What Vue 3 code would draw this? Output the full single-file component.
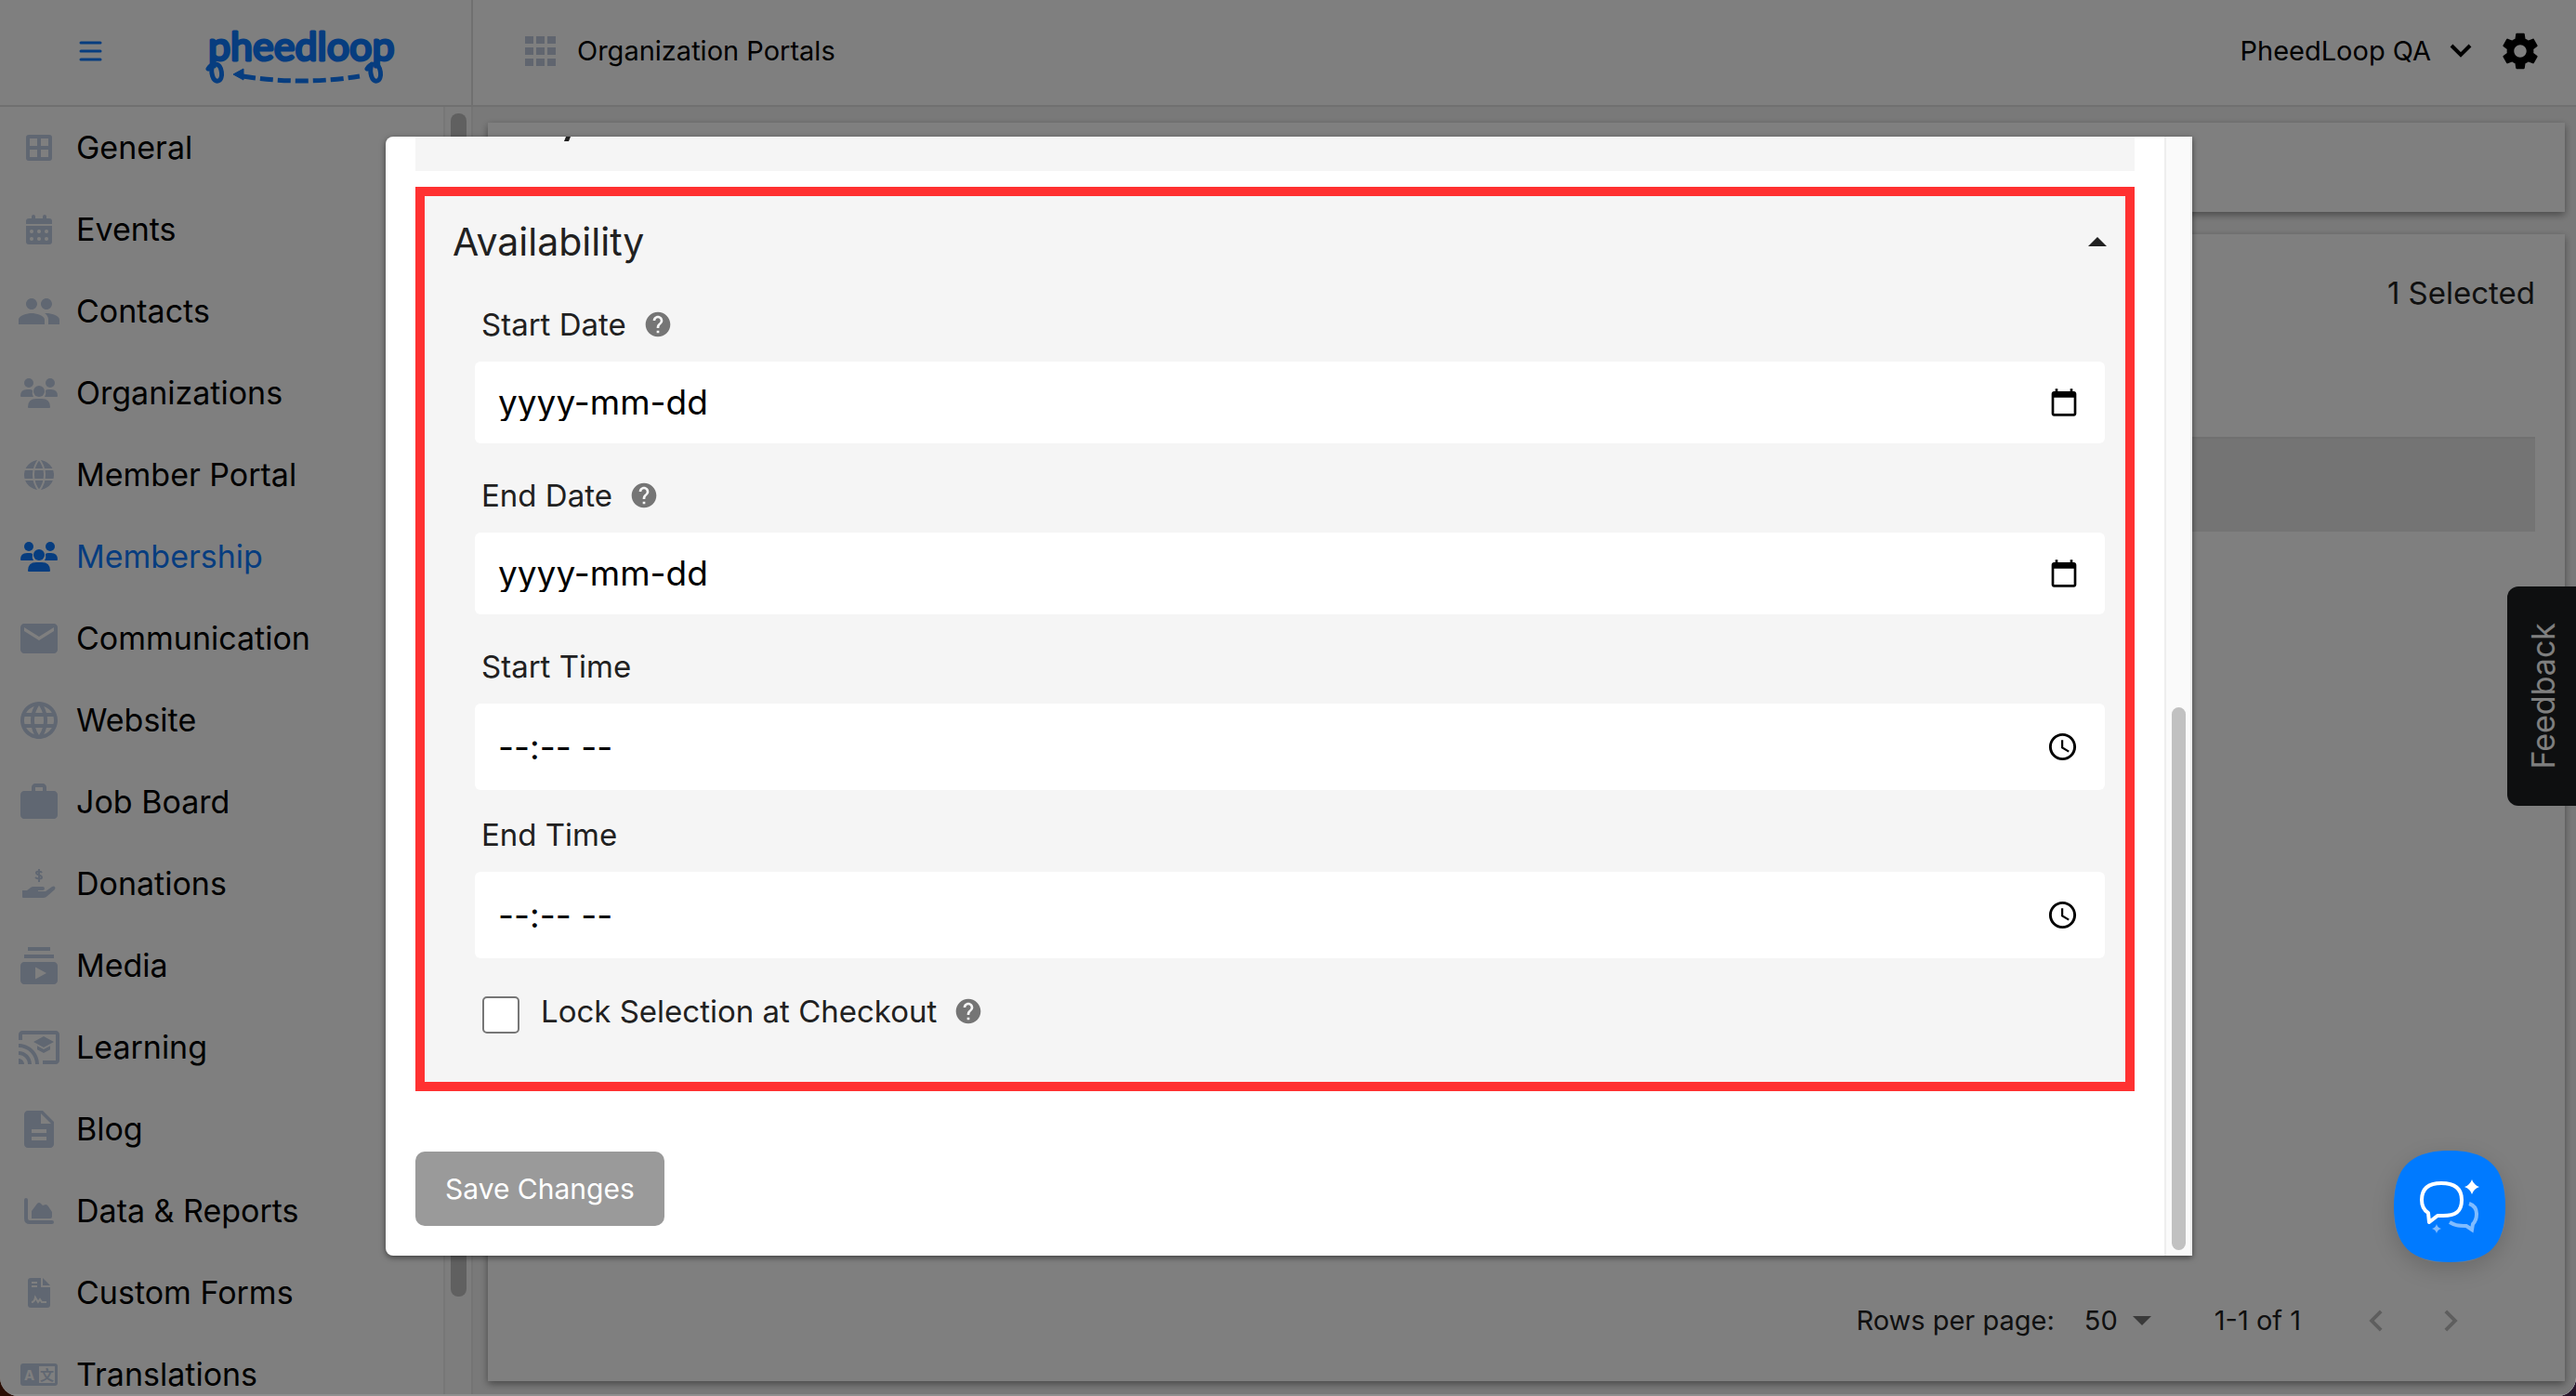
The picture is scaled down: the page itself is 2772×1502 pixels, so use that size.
<script setup>
import { ref } from 'vue'

const navItems = [
  { label: 'General', icon: 'general' },
  { label: 'Events', icon: 'events' },
  { label: 'Contacts', path: 'M16 11c1.66 0 2.99-1.34 2.99-3S17.66 5 16 5c-1.66 0-3 1.34-3 3s1.34 3 3 3zm-8 0c1.66 0 2.99-1.34 2.99-3S9.66 5 8 5C6.34 5 5 6.34 5 8s1.34 3 3 3zm0 2c-2.33 0-7 1.17-7 3.5V19h14v-2.5c0-2.33-4.67-3.5-7-3.5zm8 0c-.29 0-.62.02-.97.05 1.16.84 1.97 1.97 1.97 3.45V19h6v-2.5c0-2.33-4.67-3.5-7-3.5z' },
  { label: 'Organizations', icon: 'group' },
  { label: 'Member Portal', icon: 'globe' },
  { label: 'Membership', icon: 'group', active: true },
  { label: 'Communication', path: 'M20 4H4c-1.1 0-1.99.9-1.99 2L2 18c0 1.1.9 2 2 2h16c1.1 0 2-.9 2-2V6c0-1.1-.9-2-2-2zm0 4l-8 5-8-5V6l8 5 8-5v2z' },
  { label: 'Website', path: 'M11.99 2C6.47 2 2 6.48 2 12s4.47 10 9.99 10C17.52 22 22 17.52 22 12S17.52 2 11.99 2zm6.93 6h-2.95c-.32-1.25-.78-2.45-1.38-3.56 1.84.63 3.37 1.91 4.33 3.56zM12 4.04c.83 1.2 1.48 2.53 1.91 3.96h-3.82c.43-1.43 1.08-2.76 1.91-3.96zM4.26 14C4.1 13.36 4 12.69 4 12s.1-1.36.26-2h3.38c-.08.66-.14 1.32-.14 2 0 .68.06 1.34.14 2H4.26zm.82 2h2.95c.32 1.25.78 2.45 1.38 3.56-1.84-.63-3.37-1.9-4.33-3.56zm2.95-8H5.08c.96-1.66 2.49-2.93 4.33-3.56C8.81 5.55 8.35 6.75 8.03 8zM12 19.96c-.83-1.2-1.48-2.53-1.91-3.96h3.82c-.43 1.43-1.08 2.76-1.91 3.96zM14.34 14H9.66c-.09-.66-.16-1.32-.16-2 0-.68.07-1.35.16-2h4.68c.09.65.16 1.32.16 2 0 .68-.07 1.34-.16 2zm.25 5.56c.6-1.11 1.06-2.31 1.38-3.56h2.95c-.96 1.65-2.49 2.93-4.33 3.56zM16.36 14c.08-.66.14-1.32.14-2 0-.68-.06-1.34-.14-2h3.38c.16.64.26 1.31.26 2s-.1 1.36-.26 2h-3.38z' },
  { label: 'Job Board', path: 'M20 6h-4V4c0-1.11-.89-2-2-2h-4c-1.11 0-2 .89-2 2v2H4c-1.11 0-1.99.89-1.99 2L2 19c0 1.11.89 2 2 2h16c1.11 0 2-.89 2-2V8c0-1.11-.89-2-2-2zm-6 0h-4V4h4v2z' },
  { label: 'Donations', icon: 'donate' },
  { label: 'Media', path: 'M20 8H4V6h16v2zm-2-6H6v2h12V2zm4 10v8c0 1.1-.9 2-2 2H4c-1.1 0-2-.9-2-2v-8c0-1.1.9-2 2-2h16c1.1 0 2 .9 2 2zm-6 4l-6-3.27v6.53L16 16z' },
  { label: 'Learning', path: 'M21 3H3c-1.1 0-2 .9-2 2v3h2V5h18v14h-7v2h7c1.1 0 2-.9 2-2V5c0-1.1-.9-2-2-2zM1 18v3h3c0-1.66-1.34-3-3-3zm0-4v2c2.76 0 5 2.24 5 5h2c0-3.87-3.13-7-7-7zm0-4v2c4.97 0 9 4.03 9 9h2c0-6.08-4.93-11-11-11zm10 1.09v2L14.5 15l3.5-1.91v-2L14.5 13 11 11.09zM14.5 6L9 9l5.5 3L20 9l-5.5-3z' },
  { label: 'Blog', path: 'M14 2H6c-1.1 0-1.99.9-1.99 2L4 20c0 1.1.89 2 1.99 2H18c1.1 0 2-.9 2-2V8l-6-6zm2 16H8v-2h8v2zm0-4H8v-2h8v2zm-3-5V3.5L18.5 9H13z' },
  { label: 'Data & Reports', icon: 'chart' },
  { label: 'Custom Forms', icon: 'form' },
  { label: 'Translations', icon: 'language' }
]

const fields = [
  { id: 'start-date', label: 'Start Date', kind: 'date', help: true },
  { id: 'end-date', label: 'End Date', kind: 'date', help: true },
  { id: 'start-time', label: 'Start Time', kind: 'time', help: false },
  { id: 'end-time', label: 'End Time', kind: 'time', help: false }
]

const values = ref({ 'start-date': '', 'end-date': '', 'start-time': '', 'end-time': '' })
const lockSelection = ref(false)

const placeholders = { date: 'yyyy-mm-dd', time: '--:-- --' }
const helpPath = 'M12 2C6.48 2 2 6.48 2 12s4.48 10 10 10 10-4.48 10-10S17.52 2 12 2zm1 17h-2v-2h2v2zm2.07-7.75l-.9.92C13.45 12.9 13 13.5 13 15h-2v-.5c0-1.1.45-2.1 1.17-2.83l1.24-1.26c.37-.36.59-.86.59-1.41 0-1.1-.9-2-2-2s-2 .9-2 2H8c0-2.21 1.79-4 4-4s4 1.79 4 4c0 .88-.36 1.68-.93 2.25z'
</script>

<template>
  <div class="window">
    <header class="topbar">
      <div class="brand">
        <button class="plain menu" type="button" aria-label="Toggle menu">
          <svg width="25" height="22" viewBox="0 0 25 22" stroke="currentColor" stroke-width="3" stroke-linecap="round">
            <path d="M2 2h21M2 11h21M2 20h21" />
          </svg>
        </button>
        <a href="#" class="logo" aria-label="pheedloop">
          <svg width="216" height="100" viewBox="0 0 216 100" fill="none" stroke="currentColor">
            <text class="wordmark" x="8" y="60" fill="currentColor">pheedloop</text>
            <g stroke-width="5" stroke-linecap="round">
              <path d="M8 69q3-5 8-5c7 0 9 16 3 18s-9-10-6-18" />
              <path d="M179 69q3-5 8-5c7 0 9 16 3 18s-9-10-6-18" />
            </g>
            <path d="M45 77q64 10 126 0" stroke-width="5" stroke-dasharray="14 5" />
            <path d="M35 75l11-6v12z" fill="currentColor" />
          </svg>
        </a>
      </div>
      <div class="topmain">
        <svg class="apps" width="34" height="32" viewBox="0 0 34 32" fill="#c1cbdf">
          <path d="M0 0h9v8H0zM12 0h9v8h-9zM24 0h9v8h-9zM0 12h9v8H0zM12 12h9v8h-9zM24 12h9v8h-9zM0 24h9v8H0zM12 24h9v8h-9zM24 24h9v8h-9z" />
        </svg>
        <span class="portal">Organization Portals</span>
        <button class="plain account" type="button">
          PheedLoop QA
          <svg width="24" height="16" viewBox="0 0 24 16" fill="none" stroke="currentColor" stroke-width="4">
            <path d="M2 2l10 10L22 2" />
          </svg>
        </button>
        <button class="plain" type="button" aria-label="Settings">
          <svg width="46" height="46" viewBox="0 0 24 24" fill="currentColor">
            <path d="M19.43 12.98c.04-.32.07-.64.07-.98s-.03-.66-.07-.98l2.11-1.65c.19-.15.24-.42.12-.64l-2-3.46c-.12-.22-.39-.3-.61-.22l-2.49 1c-.52-.4-1.08-.73-1.69-.98l-.38-2.65C14.46 2.18 14.25 2 14 2h-4c-.25 0-.46.18-.49.42l-.38 2.65c-.61.25-1.17.59-1.69.98l-2.49-1c-.23-.09-.49 0-.61.22l-2 3.46c-.13.22-.07.49.12.64l2.11 1.65c-.04.32-.07.65-.07.98s.03.66.07.98l-2.11 1.65c-.19.15-.24.42-.12.64l2 3.46c.12.22.39.3.61.22l2.49-1c.52.4 1.08.73 1.69.98l.38 2.65c.03.24.24.42.49.42h4c.25 0 .46-.18.49-.42l.38-2.65c.61-.25 1.17-.59 1.69-.98l2.49 1c.23.09.49 0 .61-.22l2-3.46c.12-.22.07-.49-.12-.64l-2.11-1.65zM12 15.5c-1.93 0-3.5-1.57-3.5-3.5s1.57-3.5 3.5-3.5 3.5 1.57 3.5 3.5-1.57 3.5-3.5 3.5z" />
          </svg>
        </button>
      </div>
    </header>

    <div class="body">
      <aside class="sidebar">
        <nav class="nav">
          <a v-for="item in navItems" :key="item.label" href="#" class="nav-item" :class="{ active: item.active }">
            <svg v-if="item.path" class="nav-icon" viewBox="0 0 24 24" fill="currentColor"><path :d="item.path" /></svg>
            <svg v-else class="nav-icon" viewBox="0 0 48 48" fill="currentColor">
              <path v-if="item.icon === 'general'" fill-rule="evenodd" d="M13 10h22q3 0 3 3v22q0 3-3 3H13q-3 0-3-3V13q0-3 3-3zm1 4v8h8v-8zm12 0v8h8v-8zM14 26v8h8v-8zm12 0v8h8v-8z" />
              <g v-else-if="item.icon === 'events'">
                <path d="M10 18v-3q0-3 3-3h3v-2q0-2 2-2t2 2v2h8v-2q0-2 2-2t2 2v2h3q3 0 3 3v3zM10 20h28v17q0 3-3 3H13q-3 0-3-3z" />
                <g fill="#fff">
                  <circle cx="16" cy="26" r="2" /><circle cx="24" cy="26" r="2" /><circle cx="32" cy="26" r="2" />
                  <circle cx="16" cy="34" r="2" /><circle cx="24" cy="34" r="2" /><circle cx="32" cy="34" r="2" />
                </g>
              </g>
              <g v-else-if="item.icon === 'group'">
                <circle cx="13" cy="13" r="5" /><circle cx="36" cy="13" r="5" /><circle cx="24" cy="22" r="6" />
                <path d="M5 28q-1 0-1-1 0-7 7-7h3q2 0 3 1-1 4 1 7zM43 28q1 0 1-1 0-7-7-7h-3q-2 0-3 1 1 4-1 7zM12 39q0-9 9-9h6q9 0 9 9 0 1-1 1H13q-1 0-1-1z" />
              </g>
              <g v-else-if="item.icon === 'globe'">
                <circle cx="24" cy="24" r="16" />
                <path d="M8 18h32M8 29h32M24 7c-8 10-8 24 0 34M24 7c8 10 8 24 0 34" fill="none" stroke="#fff" stroke-width="2" />
              </g>
              <g v-else-if="item.icon === 'donate'">
                <path d="M27 12c-1-2-6-2-6 0 0 3 6 2 6 5 0 2-5 2-7 0M24 8v14" fill="none" stroke="currentColor" stroke-width="2" />
                <path d="M6 31l5 0 4-3q1-1 3-1h10q2 0 2 2t-2 2h-5v1h8l7-5q2-1 3 0t0 3l-8 7q-2 2-4 2H7q-1 0-1-1z" />
              </g>
              <g v-else-if="item.icon === 'chart'">
                <path d="M10 12v20q0 4 4 4h24" fill="none" stroke="currentColor" stroke-width="4" stroke-linecap="round" />
                <path d="M16 32v-8l6-8q2-2 4 0l2 2 3-1q2 0 3 2l4 6v5q0 2-2 2z" />
              </g>
              <g v-else-if="item.icon === 'form'">
                <path d="M28 8v8h8zM15 8h11v10h10v19q0 3-3 3H15q-3 0-3-3V11q0-3 3-3z" />
                <path d="M16 13h6M16 17h6M16 34q3 0 4-5l3 5 2-3 2 3h5" fill="none" stroke="#fff" stroke-width="2" />
              </g>
              <g v-else>
                <path fill-rule="evenodd" d="M7 12h34q3 0 3 3v18q0 3-3 3H7q-3 0-3-3V15q0-3 3-3zm17 3v18h17V15z" />
                <text class="glyph" x="8" y="30" fill="#fff">A</text>
                <text class="glyph" x="25" y="30">文</text>
              </g>
            </svg>
            {{ item.label }}
          </a>
        </nav>
        <div class="track"><div class="thumb"></div></div>
      </aside>

      <main class="main">
        <section class="card toolbar"></section>
        <section class="card list">
          <p class="selected">1 Selected</p>
          <div class="band"></div>
          <footer class="pager">
            <label for="rows">Rows per page:</label>
            <select id="rows" class="rows"><option>50</option></select>
            <svg width="20" height="10" viewBox="0 0 20 10" fill="#757575"><path d="M0 0h20L10 10z" /></svg>
            <span class="range">1-1 of 1</span>
            <button class="plain step" type="button" aria-label="Previous page" disabled>
              <svg width="46" height="46" viewBox="0 0 24 24" fill="currentColor"><path d="M15.41 7.41L14 6l-6 6 6 6 1.41-1.41L10.83 12z" /></svg>
            </button>
            <button class="plain step" type="button" aria-label="Next page" disabled>
              <svg width="46" height="46" viewBox="0 0 24 24" fill="currentColor"><path d="M10 6L8.59 7.41 13.17 12l-4.58 4.59L10 18l6-6z" /></svg>
            </button>
          </footer>
        </section>
      </main>
    </div>

    <button class="plain feedback" type="button"><span>Feedback</span></button>

    <div class="overlay">
      <div class="dialog" role="dialog" aria-label="Edit availability">
        <form class="content" @submit.prevent>
          <div class="previous">
            <svg width="8" height="6" viewBox="0 0 8 6" fill="#212121"><path d="M2 0h5L5 5H0z" /></svg>
          </div>
          <section class="panel">
            <button class="plain panel-head" type="button" aria-expanded="true">
              Availability
              <svg width="20" height="10" viewBox="0 0 20 10" fill="#212121"><path d="M0 10h20L10 0z" /></svg>
            </button>
            <div class="fields">
              <div v-for="f in fields" :key="f.id" class="field" :class="f.kind">
                <div class="field-label">
                  <label :for="f.id">{{ f.label }}</label>
                  <svg v-if="f.help" class="help" viewBox="0 0 24 24"><path :d="helpPath" /></svg>
                </div>
                <div class="control">
                  <input :id="f.id" v-model="values[f.id]" type="text" :placeholder="placeholders[f.kind]" />
                  <button class="plain" type="button" :aria-label="'Pick ' + f.label">
                    <svg v-if="f.kind === 'date'" width="32" height="32" viewBox="0 0 24 24"><path d="M20 3h-1V1h-2v2H7V1H5v2H4c-1.1 0-2 .9-2 2v16c0 1.1.9 2 2 2h16c1.1 0 2-.9 2-2V5c0-1.1-.9-2-2-2zm0 18H4V8h16v13z" /></svg>
                    <svg v-else width="35" height="35" viewBox="0 0 24 24"><path d="M11.99 2C6.47 2 2 6.48 2 12s4.47 10 9.99 10C17.52 22 22 17.52 22 12S17.52 2 11.99 2zM12 20c-4.42 0-8-3.58-8-8s3.58-8 8-8 8 3.58 8 8-3.58 8-8 8zm.5-13H11v6l5.25 3.15.75-1.23-4.5-2.67z" /></svg>
                  </button>
                </div>
              </div>
              <div class="lock">
                <input id="lock" v-model="lockSelection" type="checkbox" />
                <label for="lock">Lock Selection at Checkout</label>
                <svg class="help" viewBox="0 0 24 24"><path :d="helpPath" /></svg>
              </div>
            </div>
          </section>
          <button class="save" type="submit">Save Changes</button>
        </form>
        <div class="track dialog-track"><div class="thumb"></div></div>
      </div>
    </div>

    <button class="plain chat" type="button" aria-label="Open chat">
      <svg width="120" height="120" viewBox="0 0 120 120">
        <path d="M60 0c42 0 60 18 60 60s-18 60-60 60S0 102 0 60 18 0 60 0z" fill="#007aff" />
        <path d="M51 35c15 0 22 6 22 18 0 13-7 17-20 17h-6l-9 7-1-10c-5-3-7-8-7-14 0-12 7-18 21-18z" fill="none" stroke="#fff" stroke-width="4" stroke-linejoin="round" />
        <path d="M81 57c6 2 8 6 8 11 0 6-2 9-4 11l-1 6-6-4c-10 0-13-1-18-4" fill="none" stroke="#80bcff" stroke-width="4" />
        <path d="M84 31q2 6 8 8-6 2-8 8-2-6-8-8 6-2 8-8z" fill="#fff" />
        <path d="M46 79q1 4 5 5-4 1-5 5-1-4-5-5 4-1 5-5z" fill="#80bcff" />
      </svg>
    </button>
  </div>
</template>

<style>
html,
body {
  background: linear-gradient(90deg, #2b0e05, #26152b);
  height: 100%;
  overflow: hidden;
}
</style>

<style scoped>
* {
  box-sizing: border-box;
}
.window {
  position: relative;
  display: flex;
  flex-direction: column;
  height: 100vh;
  overflow: hidden;
  border-radius: 0 0 20px 20px;
  background: #fff;
  color: #000;
  font-family: Inter, "Noto Sans", sans-serif;
  font-size: 33px;
  line-height: 40px;
}
svg {
  display: block;
  flex: none;
}
.plain {
  border: 0;
  padding: 0;
  background: none;
  color: inherit;
  font: inherit;
}
.topbar {
  display: flex;
  flex: none;
  height: 115px;
  border-bottom: 2px solid #e0e0e0;
  font-size: 29px;
}
.brand {
  display: flex;
  align-items: center;
  gap: 106px;
  width: 509px;
  padding: 0 0 4px 85px;
  border-right: 2px solid #e0e0e0;
  color: #0f7bff;
}
.logo {
  color: inherit;
}
.wordmark {
  font-family: Lato, sans-serif;
  font-size: 43px;
  font-weight: 400;
  stroke-width: 3px;
  stroke-linejoin: round;
}
.topmain {
  display: flex;
  flex: 1;
  align-items: center;
  padding: 0 37px 4px 56px;
}
.portal {
  margin-left: 22px;
}
.account {
  display: flex;
  align-items: center;
  gap: 20px;
  margin: 0 29px 0 auto;
}
.body {
  display: flex;
  flex: 1;
  min-height: 0;
}
.sidebar {
  display: flex;
  width: 509px;
  border-right: 2px solid #e8e8e8;
}
.nav {
  flex: 1;
  overflow: hidden;
}
.nav-item {
  display: flex;
  align-items: center;
  gap: 16px;
  height: 88px;
  padding-left: 18px;
  color: #000;
  font-size: 34px;
  text-decoration: none;
}
.nav-icon {
  width: 48px;
  height: 48px;
  color: #c1cee4;
}
.nav-item.active,
.nav-item.active .nav-icon {
  color: #0f7bff;
}
.glyph {
  font-family: Inter, "Noto Sans CJK SC", sans-serif;
  font-size: 15px;
  font-weight: 700;
}
.track {
  width: 30px;
  padding: 7px 5px 107px 6px;
  border-left: 2px solid #eee;
  background: #fafafa;
}
.thumb {
  height: 100%;
  border-radius: 8px;
  background: #c1c1c1;
}
.main {
  display: flex;
  flex: 1;
  flex-direction: column;
  gap: 24px;
  padding: 17px 12px 16px 16px;
  background: #f3f3f3;
}
.card {
  background: #fff;
  box-shadow: 0 3px 8px rgba(0, 0, 0, 0.4);
}
.toolbar {
  height: 96px;
}
.list {
  display: flex;
  flex: 1;
  flex-direction: column;
  padding: 43px 32px 42px;
  color: #212121;
}
.selected {
  margin: 0;
  text-align: right;
}
.band {
  height: 102px;
  margin-top: 135px;
  border-top: 2px solid #e0e0e0;
  background: #e8e8e8;
}
.pager {
  display: flex;
  align-items: center;
  justify-content: flex-end;
  margin: auto 68px 0 0;
  font-size: 29px;
}
.rows {
  appearance: none;
  margin: 0 16px 0 32px;
  padding: 0;
  border: 0;
  background: none;
  color: inherit;
  font: inherit;
}
.range {
  margin: 0 58px 0 68px;
}
.step {
  color: #bdbdbd;
}
.step + .step {
  margin-left: 34px;
}
.feedback {
  position: absolute;
  top: 631px;
  right: 0;
  display: flex;
  align-items: center;
  justify-content: center;
  width: 74px;
  height: 236px;
  padding-left: 4px;
  border-radius: 12px 0 0 12px;
  background: #1c1e20;
  color: #fff;
  font-size: 34px;
}
.feedback span {
  writing-mode: vertical-rl;
  transform: rotate(180deg);
}
.overlay {
  position: absolute;
  inset: 0;
  display: flex;
  padding: 147px 413px 149px 415px;
  border-bottom: 2px solid #8f8f8f;
  background: rgba(0, 0, 0, 0.5);
}
.dialog {
  display: flex;
  flex: 1;
  overflow: hidden;
  border-radius: 8px 0 0 8px;
  background: #fff;
  color: #212121;
  box-shadow: 0 2px 6px rgba(0, 0, 0, 0.5);
}
.content {
  flex: 1;
  padding: 0 32px;
}
.previous {
  height: 37px;
  margin-bottom: 17px;
  padding-left: 160px;
  background: #f5f5f5;
}
.panel {
  border: 10px solid #ff3131;
  background: #f5f5f5;
}
.panel-head {
  display: flex;
  align-items: center;
  justify-content: space-between;
  width: 100%;
  height: 98px;
  padding: 0 20px 0 30px;
  font-size: 41px;
}
.fields {
  padding: 0 22px 52px 54px;
}
.field {
  margin-bottom: 16px;
}
.field.time {
  margin-bottom: 8px;
}
.field-label {
  display: flex;
  align-items: center;
  height: 80px;
  padding-left: 7px;
}
.help {
  width: 32px;
  height: 32px;
  margin-left: 18px;
  fill: #757575;
}
.control {
  display: flex;
  align-items: center;
  height: 88px;
  padding: 0 28px 0 25px;
  border-radius: 6px;
  background: #fff;
  color: #000;
  font-size: 37px;
}
.time .control {
  height: 93px;
}
.control input {
  flex: 1;
  padding: 0;
  border: 0;
  outline: 0;
  background: none;
  color: inherit;
  font: inherit;
}
.control input::placeholder {
  color: #000;
  opacity: 1;
}
.lock {
  display: flex;
  align-items: flex-start;
  padding: 33px 0 0 8px;
  line-height: 32px;
}
.lock input {
  appearance: none;
  width: 40px;
  height: 40px;
  margin: 0 23px 0 0;
  border: 2px solid #767676;
  border-radius: 5px;
  background: #fff;
}
.save {
  display: block;
  height: 80px;
  margin-top: 65px;
  padding: 0 32px;
  border: 0;
  border-radius: 10px;
  background: #9a9a9a;
  color: #fff;
  font: inherit;
  font-size: 30px;
}
.dialog-track {
  display: flex;
  align-items: flex-end;
  padding: 6px 5px 6px 6px;
  border-right: 2px solid #eee;
}
.dialog-track .thumb {
  width: 100%;
  height: 49%;
}
.chat {
  position: absolute;
  right: 76px;
  bottom: 144px;
  border-radius: 50px;
  box-shadow: 0 8px 24px rgba(0, 0, 0, 0.16);
}
</style>
